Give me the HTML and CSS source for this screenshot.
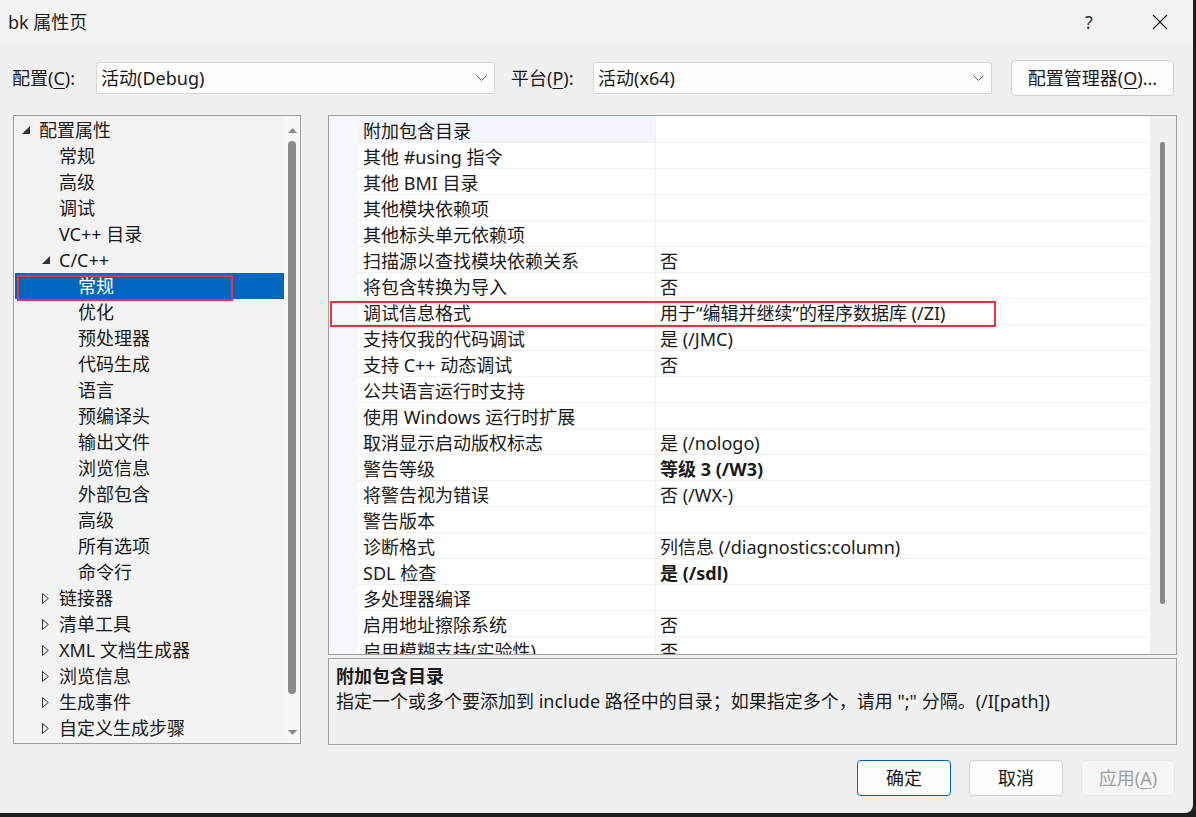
FILE: index.html
```html
<!DOCTYPE html>
<html lang="zh-CN">
<head>
  <meta charset="UTF-8"/>
  <title>bk 属性页</title>
  <link rel="stylesheet" href="styles.css">
</head>
<body>
<div class="dialog">

  <!-- Title bar -->
  <div class="titlebar">
    <span class="title">bk 属性页</span>
    <span class="help">?</span>
    <span class="close">
      <svg width="16" height="16" viewBox="0 0 16 16"><path d="M1 1 L15 15 M15 1 L1 15" stroke="#1a1a1a" stroke-width="1.2" fill="none"/></svg>
    </span>
  </div>

  <!-- Configuration / platform selectors -->
  <div class="toolbar">
    <span class="lbl lbl-config">配置(<u>C</u>):</span>
    <div class="combo">
      <span>活动(Debug)</span>
      <svg class="chev" width="11" height="6" viewBox="0 0 11 6"><polyline points="0.5,0.5 5.5,5.5 10.5,0.5" stroke="#606060" fill="none"/></svg>
    </div>
    <span class="lbl lbl-platform">平台(<u>P</u>):</span>
    <div class="combo">
      <span>活动(x64)</span>
      <svg class="chev" width="11" height="6" viewBox="0 0 11 6"><polyline points="0.5,0.5 5.5,5.5 10.5,0.5" stroke="#606060" fill="none"/></svg>
    </div>
    <button class="btn btn-manager">配置管理器(<u>O</u>)...</button>
  </div>

  <div class="main">
    <!-- Left: property tree -->
    <div class="tree">
      <div class="tree-items">
        <div class="node lv0"><span class="exp"><svg width="8" height="8" viewBox="0 0 8 8"><polygon points="8,0 8,8 0,8" fill="#333"/></svg></span>配置属性</div>
        <div class="node lv1"><span class="exp"></span>常规</div>
        <div class="node lv1"><span class="exp"></span>高级</div>
        <div class="node lv1"><span class="exp"></span>调试</div>
        <div class="node lv1"><span class="exp"></span>VC++ 目录</div>
        <div class="node lv1"><span class="exp"><svg width="8" height="8" viewBox="0 0 8 8"><polygon points="8,0 8,8 0,8" fill="#333"/></svg></span>C/C++</div>
        <div class="node lv2 selected"><span class="exp"></span>常规</div>
        <div class="node lv2"><span class="exp"></span>优化</div>
        <div class="node lv2"><span class="exp"></span>预处理器</div>
        <div class="node lv2"><span class="exp"></span>代码生成</div>
        <div class="node lv2"><span class="exp"></span>语言</div>
        <div class="node lv2"><span class="exp"></span>预编译头</div>
        <div class="node lv2"><span class="exp"></span>输出文件</div>
        <div class="node lv2"><span class="exp"></span>浏览信息</div>
        <div class="node lv2"><span class="exp"></span>外部包含</div>
        <div class="node lv2"><span class="exp"></span>高级</div>
        <div class="node lv2"><span class="exp"></span>所有选项</div>
        <div class="node lv2"><span class="exp"></span>命令行</div>
        <div class="node lv1"><span class="exp"><svg width="7" height="11" viewBox="0 0 7 11"><polygon points="0.5,0.5 6.3,5.5 0.5,10.5" stroke="#333" fill="none"/></svg></span>链接器</div>
        <div class="node lv1"><span class="exp"><svg width="7" height="11" viewBox="0 0 7 11"><polygon points="0.5,0.5 6.3,5.5 0.5,10.5" stroke="#333" fill="none"/></svg></span>清单工具</div>
        <div class="node lv1"><span class="exp"><svg width="7" height="11" viewBox="0 0 7 11"><polygon points="0.5,0.5 6.3,5.5 0.5,10.5" stroke="#333" fill="none"/></svg></span>XML 文档生成器</div>
        <div class="node lv1"><span class="exp"><svg width="7" height="11" viewBox="0 0 7 11"><polygon points="0.5,0.5 6.3,5.5 0.5,10.5" stroke="#333" fill="none"/></svg></span>浏览信息</div>
        <div class="node lv1"><span class="exp"><svg width="7" height="11" viewBox="0 0 7 11"><polygon points="0.5,0.5 6.3,5.5 0.5,10.5" stroke="#333" fill="none"/></svg></span>生成事件</div>
        <div class="node lv1"><span class="exp"><svg width="7" height="11" viewBox="0 0 7 11"><polygon points="0.5,0.5 6.3,5.5 0.5,10.5" stroke="#333" fill="none"/></svg></span>自定义生成步骤</div>
      </div>
      <!-- Tree scrollbar -->
      <div class="tree-scroll">
        <svg class="arrow" width="9" height="5" viewBox="0 0 9 5"><polygon points="4.5,0 9,5 0,5" fill="#8a8a8a"/></svg>
        <div class="tree-thumb"></div>
        <svg class="arrow" width="9" height="5" viewBox="0 0 9 5"><polygon points="0,0 9,0 4.5,5" fill="#8a8a8a"/></svg>
      </div>
      <div class="mark mark-tree"></div>
    </div>

    <!-- Right: property grid and description -->
    <div class="right">
      <div class="grid">
        <div class="gutter"></div>
        <div class="rows">
          <div class="row current"><div class="name">附加包含目录</div><div class="value"></div></div>
          <div class="row"><div class="name">其他 #using 指令</div><div class="value"></div></div>
          <div class="row"><div class="name">其他 BMI 目录</div><div class="value"></div></div>
          <div class="row"><div class="name">其他模块依赖项</div><div class="value"></div></div>
          <div class="row"><div class="name">其他标头单元依赖项</div><div class="value"></div></div>
          <div class="row"><div class="name">扫描源以查找模块依赖关系</div><div class="value">否</div></div>
          <div class="row"><div class="name">将包含转换为导入</div><div class="value">否</div></div>
          <div class="row"><div class="name">调试信息格式</div><div class="value">用于“编辑并继续”的程序数据库 (/ZI)</div></div>
          <div class="row"><div class="name">支持仅我的代码调试</div><div class="value">是 (/JMC)</div></div>
          <div class="row"><div class="name">支持 C++ 动态调试</div><div class="value">否</div></div>
          <div class="row"><div class="name">公共语言运行时支持</div><div class="value"></div></div>
          <div class="row"><div class="name">使用 Windows 运行时扩展</div><div class="value"></div></div>
          <div class="row"><div class="name">取消显示启动版权标志</div><div class="value">是 (/nologo)</div></div>
          <div class="row"><div class="name">警告等级</div><div class="value bold">等级 3 (/W3)</div></div>
          <div class="row"><div class="name">将警告视为错误</div><div class="value">否 (/WX-)</div></div>
          <div class="row"><div class="name">警告版本</div><div class="value"></div></div>
          <div class="row"><div class="name">诊断格式</div><div class="value">列信息 (/diagnostics:column)</div></div>
          <div class="row"><div class="name">SDL 检查</div><div class="value bold">是 (/sdl)</div></div>
          <div class="row"><div class="name">多处理器编译</div><div class="value"></div></div>
          <div class="row"><div class="name">启用地址擦除系统</div><div class="value">否</div></div>
          <div class="row"><div class="name">启用模糊支持(实验性)</div><div class="value">否</div></div>
        </div>
        <div class="grid-scroll"><div class="grid-thumb"></div></div>
        <div class="mark mark-grid"></div>
      </div>

      <div class="desc">
        <div class="desc-title">附加包含目录</div>
        <div class="desc-text">指定一个或多个要添加到 include 路径中的目录；如果指定多个，请用 ";" 分隔。(/I[path])</div>
      </div>
    </div>
  </div>

  <!-- Dialog buttons -->
  <div class="footer">
    <button class="btn btn-default">确定</button>
    <button class="btn">取消</button>
    <button class="btn btn-disabled">应用(<u>A</u>)</button>
  </div>
</div>
</body>
</html>
```

FILE: styles.css
```css
/* Base */
* {
  box-sizing: border-box;
}
body {
  margin: 0;
  background-color: #1e1e1e;
  font-family: "Noto Sans", "Noto Sans CJK SC", sans-serif;
  font-size: 18px;
  color: #1a1a1a;
}
u {
  text-decoration-thickness: 1px;
  text-underline-offset: 3px;
}

/* Dialog window */
.dialog {
  width: 1193px;
  height: 813px;
  background-color: #f0f0f0;
  border-bottom-right-radius: 8px;
  display: flex;
  flex-direction: column;
  overflow: hidden;
}

/* Title bar */
.titlebar {
  height: 43px;
  flex-shrink: 0;
  background-color: #f3f3f3;
  display: flex;
  align-items: center;
  padding: 0 10px 0 8px;
}
.title {
  flex: 1;
  line-height: 26px;
}
.help {
  width: 46px;
  margin-right: 25px;
  text-align: center;
  line-height: 26px;
  color: #333;
}
.close {
  width: 46px;
  height: 26px;
  display: flex;
  align-items: center;
  justify-content: center;
}

/* Selector row */
.toolbar {
  margin-top: 17px;
  height: 36px;
  display: flex;
  align-items: center;
  padding-left: 12px;
}
.lbl {
  line-height: 26px;
  white-space: nowrap;
}
.lbl-config {
  width: 84px;
}
.lbl-platform {
  width: 82px;
  margin-left: 16px;
}
.combo {
  width: 399px;
  height: 32px;
  background-color: #fdfdfd;
  border: 1px solid #d6d6d6;
  border-radius: 2px;
  display: flex;
  align-items: center;
  justify-content: space-between;
  padding: 0 7px 0 4px;
  line-height: 26px;
}
.btn {
  font-family: inherit;
  font-size: 18px;
  color: #1a1a1a;
  background-color: #fdfdfd;
  border: 1px solid #d0d0d0;
  border-radius: 4px;
  height: 36px;
  padding: 0;
  line-height: 26px;
}
.btn-manager {
  width: 163px;
  margin-left: 19px;
}

/* Main area */
.main {
  margin-top: 19px;
  height: 630px;
  display: flex;
  padding-left: 13px;
}

/* Tree */
.tree {
  position: relative;
  width: 288px;
  height: 629px;
  border: 1px solid #a0a0a0;
  background-color: #f3f3f3;
  display: flex;
}
.tree-items {
  flex: 1;
  padding: 1px 0 0 1px;
}
.node {
  height: 26px;
  line-height: 26px;
  display: flex;
  align-items: center;
  white-space: nowrap;
}
.node.lv0 { padding-left: 7px; }
.node.lv1 { padding-left: 27px; }
.node.lv2 { padding-left: 46px; }
.exp {
  width: 17px;
  flex-shrink: 0;
  display: flex;
  align-items: center;
}
.node.selected {
  background-color: #0067c0;
  color: #ffffff;
}
.tree-scroll {
  width: 16px;
  background-color: #f6f6f6;
  display: flex;
  flex-direction: column;
  align-items: center;
  padding: 12px 0 8px;
}
.tree-thumb {
  width: 8px;
  flex: 1;
  margin: 8px 0 36px;
  border-radius: 4px;
  background-color: #8b8b8b;
}

/* Red annotation boxes */
.mark {
  position: absolute;
  border: 2px solid #e8343a;
}
.mark-tree {
  left: 3px;
  top: 159px;
  width: 216px;
  height: 26px;
}
.mark-grid {
  left: 1px;
  top: 185px;
  width: 666px;
  height: 26px;
}

/* Property grid */
.right {
  margin-left: 27px;
  width: 849px;
  display: flex;
  flex-direction: column;
}
.grid {
  position: relative;
  height: 540px;
  border: 1px solid #a0a0a0;
  display: flex;
  background-color: #ffffff;
  overflow: hidden;
}
.gutter {
  width: 29px;
  background-color: #f7f8fb;
}
.rows {
  flex: 1;
  padding-top: 1px;
  overflow: hidden;
}
.row {
  height: 26px;
  display: flex;
  border-bottom: 1px solid #f0f0f2;
}
.name,
.value {
  padding-top: 4px;
  line-height: 21px;
  white-space: nowrap;
  overflow: hidden;
}
.name {
  width: 298px;
  padding-left: 5px;
  border-right: 1px solid #f0f0f2;
}
.row.current .name {
  background-color: #f2f5fb;
}
.value {
  flex: 1;
  padding-left: 4px;
}
.bold {
  font-weight: bold;
}
.grid-scroll {
  width: 26px;
  background-color: #f0f0f0;
  padding: 26px 0 50px 10px;
}
.grid-thumb {
  width: 5px;
  height: 100%;
  border-radius: 2px;
  background-color: #8a8a8a;
}

/* Description panel */
.desc {
  margin-top: 3px;
  height: 87px;
  border: 1px solid #a0a0a0;
  padding: 5px 7px;
}
.desc-title {
  font-weight: bold;
  line-height: 25px;
}
.desc-text {
  line-height: 25px;
}

/* Bottom buttons */
.footer {
  margin-top: 15px;
  display: flex;
  justify-content: flex-end;
  gap: 18px;
  padding-right: 18px;
}
.footer .btn {
  width: 94px;
}
.btn-default {
  border-color: #005fb8;
}
.btn-disabled {
  background-color: #f5f5f5;
  border-color: #e8e8e8;
  color: #a0a0a0;
}
```
